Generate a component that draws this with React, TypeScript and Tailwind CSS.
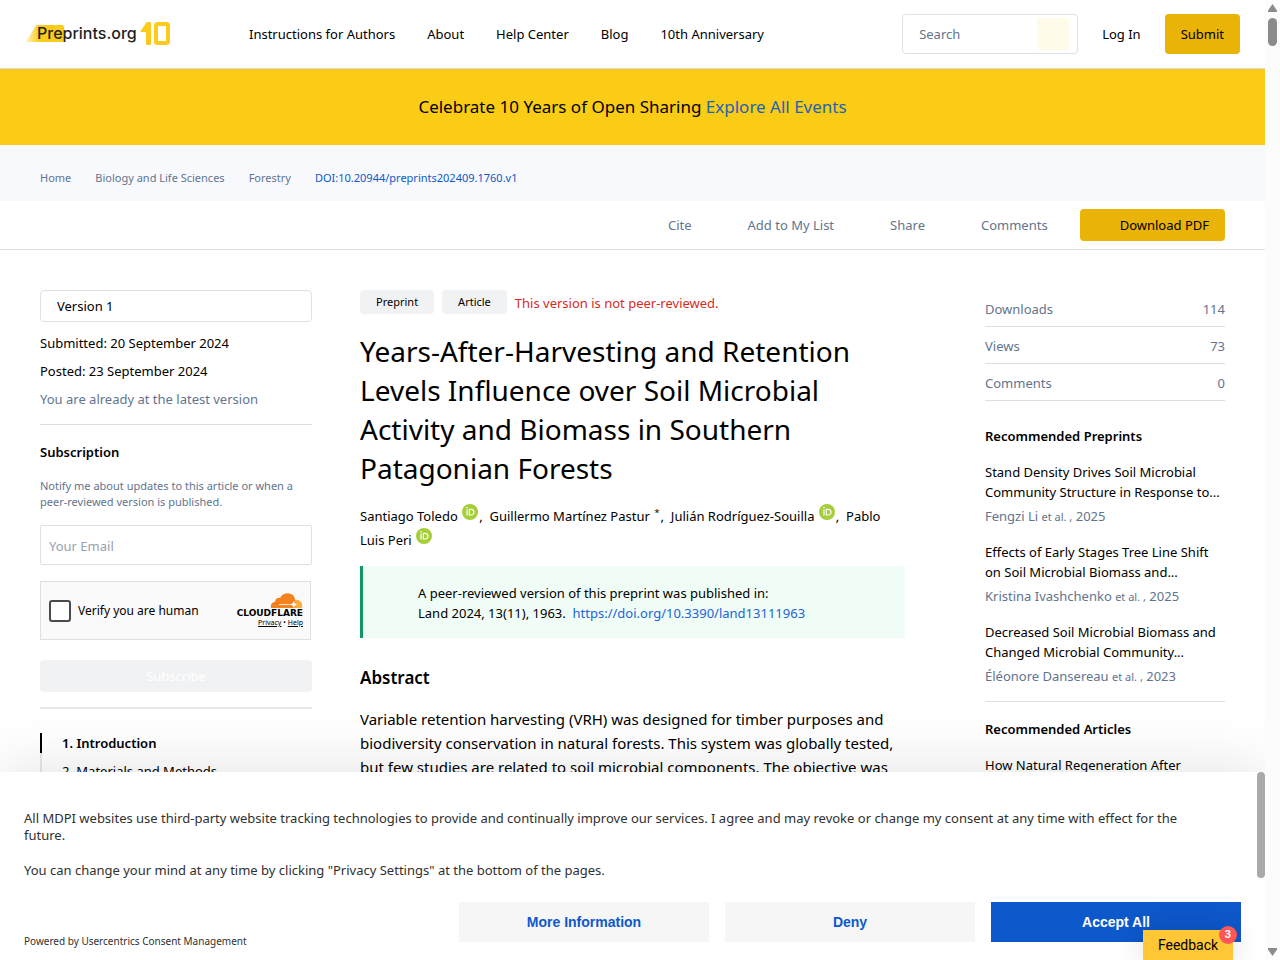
import type { ReactNode } from "react";

interface Recommended {
  title: string;
  author: string;
  year: number;
}

const navLinks = ["Instructions for Authors", "About", "Help Center", "Blog", "10th Anniversary"];

const breadcrumbs = ["Home", "Biology and Life Sciences", "Forestry"];

const metrics = [
  { label: "Downloads", value: 114 },
  { label: "Views", value: 73 },
  { label: "Comments", value: 0 },
];

const recommended: Recommended[] = [
  {
    title: "Stand Density Drives Soil Microbial Community Structure in Response to...",
    author: "Fengzi Li",
    year: 2025,
  },
  {
    title: "Effects of Early Stages Tree Line Shift on Soil Microbial Biomass and...",
    author: "Kristina Ivashchenko",
    year: 2025,
  },
  {
    title: "Decreased Soil Microbial Biomass and Changed Microbial Community...",
    author: "Éléonore Dansereau",
    year: 2023,
  },
];

function Logo() {
  return (
    <svg width="146" height="26" viewBox="0 0 146 26" role="img" aria-label="Preprints.org 10">
      <defs>
        <linearGradient id="logo-fade" x1="0" x2="1" y1="0" y2="0">
          <stop offset="0" stopColor="#fef3c0" />
          <stop offset="0.35" stopColor="#fccb1c" />
        </linearGradient>
      </defs>
      <path d="M0 21 9 6q1-2 3-2h24q2 0 2 2v13q0 2-2 2z" fill="url(#logo-fade)" />
      <text x="11" y="18" fontSize="16" fontWeight="500" fontFamily="Inter, 'Liberation Sans', sans-serif" fill="#222">
        Preprints.org
      </text>
      <path d="M114 11l6-9q1-1 2-1h2q1 0 1 1v21q0 1-1 1h-3q-1 0-1-1V11z" fill="#fccb1c" />
      <rect x="130" y="3" width="12" height="19" rx="1.500" fill="none" stroke="#fccb1c" strokeWidth="4" />
    </svg>
  );
}

function OrcidIcon() {
  return (
    <svg className="mx-px inline-block size-4 -translate-y-1.5" viewBox="0 0 16 16" role="img" aria-label="ORCID">
      <circle cx="8" cy="8" r="8" fill="#a6ce39" />
      <g fill="none" stroke="#fff" strokeWidth="1.2">
        <path d="M5 5.400v6.200" />
        <path d="M7.400 5.400v5.600h1.800a2.800 2.800 0 0 0 0-5.600z" />
      </g>
      <circle cx="5" cy="3.800" r=".8" fill="#fff" />
    </svg>
  );
}

function CloudflareLogo() {
  return (
    <svg width="67" height="24" viewBox="0 0 67 24" role="img" aria-label="Cloudflare">
      <path d="M35 15c-1-4 2-6 4-6 0-3 3-5 5-4 2-4 7-6 11-4 3 1 4 4 4 6l-1 8z" fill="#f6821f" />
      <path d="M58 15l1-8c5-1 8 3 7 8z" fill="#fbad41" />
      <path d="M43 11.500h13" stroke="#fff" strokeWidth=".8" />
      <path d="M57.500 8l1 2.500 2.500 1-2.500 1-1 2.500-1-2.500-2.500-1 2.500-1z" fill="#fff" />
      <text x="67" y="23" textAnchor="end" fontSize="9" fontWeight="700" fontFamily="'DejaVu Sans', sans-serif">
        CLOUDFLARE
      </text>
    </svg>
  );
}

function Header() {
  return (
    <header className="flex h-[69px] items-center border-b border-[#d5d9e2] bg-white pl-[26px] pr-[25px] text-[13px]">
      <a href="#home">
        <Logo />
      </a>
      <nav className="ml-[77px] flex gap-8 pt-0.5">
        {navLinks.map(link => (
          <a key={link} href="#nav" className="whitespace-nowrap">
            {link}
          </a>
        ))}
      </nav>
      <div className="ml-auto flex items-center">
        <div className="flex h-10 w-44 items-center rounded border border-[#dfe1e7] pl-4 pr-2">
          <input
            type="text"
            aria-label="Search"
            placeholder="Search"
            className="min-w-0 flex-1 pt-0.5 outline-none placeholder:text-slate-500"
          />
          <button aria-label="Run search" className="size-8 rounded bg-[#fefce8]" />
        </div>
        <a href="#login" className="ml-6 pt-0.5">
          Log In
        </a>
        <button className="ml-6 h-10 rounded bg-[#eab308] px-4 pt-0.5">Submit</button>
      </div>
    </header>
  );
}

function Toolbar() {
  return (
    <div className="flex h-[49px] items-center justify-end gap-14 border-b border-[#dcdee2] px-10 text-[13px] text-slate-500">
      <button className="pt-0.5">Cite</button>
      <button className="pt-0.5">Add to My List</button>
      <button className="pt-0.5">Share</button>
      <button className="pt-0.5">Comments</button>
      <button className="-ml-6 h-8 rounded bg-[#eab308] pl-10 pr-4 pt-0.5 text-black">Download PDF</button>
    </div>
  );
}

function LeftColumn() {
  return (
    <aside className="w-68 shrink-0 text-[13px]">
      <select aria-label="Version" className="h-8 w-full appearance-none rounded border border-[#dfe1e7] px-4 pt-0.5">
        <option>Version 1</option>
      </select>
      <div className="mt-[11px] flex flex-col gap-2 leading-5">
        <p>Submitted: 20 September 2024</p>
        <p>Posted: 23 September 2024</p>
        <p className="text-slate-500">You are already at the latest version</p>
      </div>
      <hr className="mt-[15px] border-[#dcdee2]" />
      <h2 className="mt-[17px] font-semibold leading-5">Subscription</h2>
      <p className="mt-4 text-[11px] leading-4 text-slate-500">
        Notify me about updates to this article or when a peer-reviewed version is published.
      </p>
      <input
        type="email"
        aria-label="Your Email"
        placeholder="Your Email"
        className="mt-[15px] h-10 w-full rounded-xs border border-[#dfe1e7] px-2 pt-0.5 placeholder:text-gray-400"
      />
      <div className="mr-px mt-4 flex h-[59px] items-center border border-[#e0e0e0] bg-[#fafafa] pl-2 pr-[7px]">
        <label className="flex items-center gap-[7px] text-[12px]">
          <input type="checkbox" className="size-[22px] appearance-none rounded-[3px] border-2 border-[#4a4a4a] bg-white" />
          Verify you are human
        </label>
        <div className="ml-auto flex flex-col items-end">
          <CloudflareLogo />
          <p className="mt-px text-[7px] leading-[10px]">
            <a href="#privacy" className="underline">
              Privacy
            </a>{" "}
            •{" "}
            <a href="#help" className="underline">
              Help
            </a>
          </p>
        </div>
      </div>
      <button disabled className="mt-5 h-8 w-full rounded bg-[#f1f2f4] pt-0.5 text-white">
        Subscribe
      </button>
      <hr className="mt-[15px] border-t-2 border-gray-200" />
      <nav className="mt-6">
        <a href="#introduction" className="block border-l-2 border-black pl-5 font-semibold leading-5">
          1. Introduction
        </a>
        <a href="#methods" className="block border-l-2 border-gray-200 pl-5 pt-2 leading-5">
          2. Materials and Methods
        </a>
      </nav>
    </aside>
  );
}

function Author({ name, children }: { name: string; children: ReactNode }) {
  return (
    <span className="whitespace-nowrap">
      <a href="#author">{name}</a> {children}
    </span>
  );
}

function Article() {
  return (
    <main className="ml-12 min-w-0 flex-1">
      <div className="flex items-center gap-2 text-[13px]">
        <span className="rounded bg-[#f1f2f4] px-4 text-[11px] leading-6">Preprint</span>
        <span className="rounded bg-[#f1f2f4] px-4 text-[11px] leading-6">Article</span>
        <span className="pt-0.5 leading-5 text-[#d92a1c]">This version is not peer-reviewed.</span>
      </div>
      <h1 className="mt-[18px] text-[28px] leading-[39px]">
        Years-After-Harvesting and Retention Levels Influence over Soil Microbial Activity and Biomass in Southern
        Patagonian Forests
      </h1>
      <p className="mt-4 text-[13px] leading-6">
        <Author name="Santiago Toledo">
          <OrcidIcon />
        </Author>
        ,&nbsp;{" "}
        <Author name="Guillermo Martínez Pastur">
          <sup className="mx-px">*</sup>
        </Author>
        ,&nbsp;{" "}
        <Author name="Julián Rodríguez-Souilla">
          <OrcidIcon />
        </Author>
        ,&nbsp; <a href="#author">Pablo</a>{" "}
        <Author name="Luis Peri">
          <OrcidIcon />
        </Author>
      </p>
      <div className="mt-[14px] border-l-3 border-[#0f9960] bg-[#f0fdf6] pb-[15px] pl-[55px] pt-[17px] text-[13px] leading-5">
        <p>A peer-reviewed version of this preprint was published in:</p>
        <p>
          Land 2024, 13(11), 1963.&nbsp;{" "}
          <a href="#doi" className="text-[#1d63d8]">
            https://doi.org/10.3390/land13111963
          </a>
        </p>
      </div>
      <h2 className="mt-[26px] text-[17px] font-semibold leading-7">Abstract</h2>
      <p className="mt-[15px] text-[15px] leading-6">
        Variable retention harvesting (VRH) was designed for timber purposes and biodiversity conservation in natural
        forests. This system was globally tested, but few studies are related to soil microbial components. The
        objective was
      </p>
    </main>
  );
}

function RightColumn() {
  return (
    <aside className="ml-20 w-60 shrink-0 text-[13px] leading-5">
      <dl>
        {metrics.map(metric => (
          <div key={metric.label} className="flex h-[37px] items-end justify-between border-b border-[#dcdee2] pb-[7px] text-slate-500">
            <dt>{metric.label}</dt>
            <dd>{metric.value}</dd>
          </div>
        ))}
      </dl>
      <h2 className="mt-[25px] font-semibold">Recommended Preprints</h2>
      <ul className="mt-4 flex flex-col gap-4">
        {recommended.map(item => (
          <li key={item.author}>
            <a href="#preprint" className="block">
              {item.title}
            </a>
            <p className="mt-1 text-slate-500">
              {item.author} <span className="text-[11px] leading-4">et al. ,</span> {item.year}
            </p>
          </li>
        ))}
      </ul>
      <hr className="mt-[15px] border-[#dcdee2]" />
      <h2 className="mt-[17px] font-semibold">Recommended Articles</h2>
      <a href="#article" className="mt-4 block">
        How Natural Regeneration After
      </a>
    </aside>
  );
}

function CookieBanner() {
  return (
    <section
      aria-label="Privacy consent"
      className="absolute inset-x-0 bottom-0 flex bg-white shadow-[0_0_60px_rgba(0,0,0,0.12)]"
    >
      <div className="min-w-0 flex-1 pl-6 pt-[38px] text-[13px] text-[#303030]">
        <div className="pr-14 leading-[17px]">
          <p>
            All MDPI websites use third-party website tracking technologies to provide and continually improve our
            services. I agree and may revoke or change my consent at any time with effect for the future.
          </p>
          <p className="mt-[18px]">
            You can change your mind at any time by clicking "Privacy Settings" at the bottom of the pages.
          </p>
        </div>
        <div className="mt-[23px] flex items-end justify-between pb-[18px] pr-4">
          <p className="-mb-1.5 text-[10px] leading-[14px]">
            Powered by <a href="#usercentrics">Usercentrics Consent Management</a>
          </p>
          <div className="flex gap-4 font-['Liberation_Sans',sans-serif] text-[14px] font-bold">
            <button className="h-10 w-[250px] bg-[#f6f6f6] text-[#0d58cb]">More Information</button>
            <button className="h-10 w-[250px] bg-[#f6f6f6] text-[#0d58cb]">Deny</button>
            <button className="h-10 w-[250px] bg-[#0d58cb] text-white">Accept All</button>
          </div>
        </div>
      </div>
      <div className="w-2">
        <div className="h-[106px] rounded-full bg-[#a9a9a9]" />
      </div>
    </section>
  );
}

function FeedbackTab() {
  return (
    <button className="absolute bottom-0 right-8 h-[30px] w-[90px] bg-[#ffc736] font-[Roboto,sans-serif] text-[14px] shadow-[0_0_30px_rgba(0,0,0,0.15)]">
      Feedback
      <span className="absolute -right-1 -top-1 size-[18px] rounded-full bg-[#ff5757] text-[11px] font-bold leading-[18px] text-white">
        3
      </span>
    </button>
  );
}

function PageScrollbar() {
  return (
    <div aria-hidden="true" className="flex w-[15px] shrink-0 flex-col items-center bg-[#fcfcfc] py-1 text-[#8b8b8b]">
      <svg width="9" height="8" viewBox="0 0 9 8" fill="currentColor">
        <path d="M4.500 0 9 6.500V8H0V6.500z" />
      </svg>
      <div className="mt-[6px] h-7 w-[9px] rounded-full bg-[#8b8b8b]" />
      <svg className="mt-auto" width="9" height="8" viewBox="0 0 9 8" fill="currentColor">
        <path d="M4.500 8 9 1.500V0H0v1.500z" />
      </svg>
    </div>
  );
}

export default function App() {
  return (
    <div className="flex h-screen bg-white font-['Noto_Sans','Open_Sans',sans-serif] text-black">
      <div className="relative min-w-0 flex-1 overflow-hidden">
        <Header />
        <div className="bg-[#facc15] py-6 text-center text-[17px] leading-7">
          Celebrate 10 Years of Open Sharing{" "}
          <a href="#events" className="text-[#1d63b8]">
            Explore All Events
          </a>
        </div>
        <nav
          aria-label="Breadcrumb"
          className="flex h-14 items-center gap-6 bg-[#f8f9fd] px-10 pt-2.5 text-[11px] text-slate-500"
        >
          {breadcrumbs.map(crumb => (
            <a key={crumb} href="#crumb">
              {crumb}
            </a>
          ))}
          <a href="#doi" className="text-[#0d58cb]">
            DOI:10.20944/preprints202409.1760.v1
          </a>
        </nav>
        <Toolbar />
        <div className="flex items-start px-10 pt-10">
          <LeftColumn />
          <Article />
          <RightColumn />
        </div>
        <CookieBanner />
        <FeedbackTab />
      </div>
      <PageScrollbar />
    </div>
  );
}
